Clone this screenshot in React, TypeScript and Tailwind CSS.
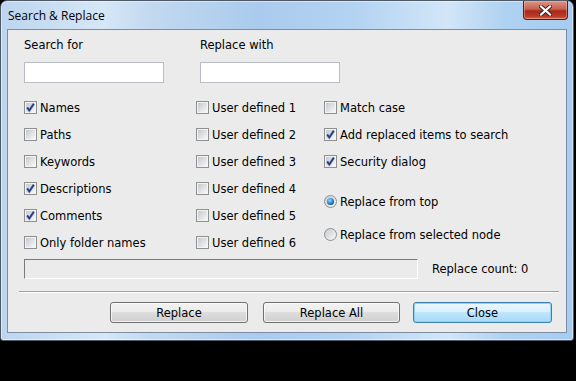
import React from 'react';

const textClass = "text-[11.5px] leading-[14px] text-black font-['DejaVu_Sans',sans-serif]";

function CheckBox({ checked, label }: { checked?: boolean; label: string }) {
  return (
    <div className="flex h-[27px] items-center">
      <span className="relative flex h-[13px] w-[13px] shrink-0 items-center justify-center border border-[#8e8f8f] bg-[#f4f4f4]">
        <span className="h-[9px] w-[9px] bg-gradient-to-br from-[#c5c9d0] to-[#f7f7f7]" />
        {checked && (
          <svg className="absolute left-0 top-0" width="11" height="11" viewBox="0 0 11 11">
            <path d="M2.2 5.6 L4.3 8.4 L8.8 1.8" stroke="#8da0c8" strokeWidth="2.6" fill="none" />
            <path d="M2.2 5.6 L4.3 8.4 L8.8 1.8" stroke="#233a7a" strokeWidth="1.6" fill="none" />
          </svg>
        )}
      </span>
      <span className={textClass + " ml-[3px] whitespace-nowrap"}>{label}</span>
    </div>
  );
}

function Radio({ checked, label }: { checked?: boolean; label: string }) {
  return (
    <div className="flex h-[27px] items-center">
      <span className="flex h-[13px] w-[13px] shrink-0 items-center justify-center rounded-full border border-[#8e8f8f] bg-gradient-to-br from-[#c8ccd2] to-[#f8f8f8]">
        {checked && (
          <span className="h-[7px] w-[7px] rounded-full bg-[radial-gradient(circle_at_40%_35%,#9bd8fa_0%,#2f8fd8_45%,#0c3a6c_85%)]" />
        )}
      </span>
      <span className={textClass + " ml-[3px] whitespace-nowrap"}>{label}</span>
    </div>
  );
}

function Button({ label, primary, width }: { label: string; primary?: boolean; width: string }) {
  const look = primary
    ? "border-[#3c7fb1] bg-[linear-gradient(#eaf6fd_0%,#d9f0fc_50%,#bee6fd_50%,#a7d9f5_100%)] shadow-[inset_0_0_0_1px_#8fd3f6]"
    : "border-[#707070] bg-[linear-gradient(#f2f2f2_0%,#ebebeb_50%,#dddddd_50%,#cfcfcf_100%)] shadow-[inset_0_0_0_1px_rgba(255,255,255,0.7)]";
  return (
    <div className={"flex h-[21px] items-center justify-center rounded-[3px] border " + width + " " + look}>
      <span className={textClass}>{label}</span>
    </div>
  );
}

export default function App() {
  return (
    <div className="h-[381px] w-[576px] overflow-hidden bg-black">
      <div className="flex h-[341px] w-[574px] flex-col rounded-t-[7px] rounded-b-[3px] border border-[#4f5966] bg-[linear-gradient(90deg,#bcd5ee_0%,#d6e7f6_18%,#c2d9f0_26%,#aacbed_45%,#b3d3f2_62%,#d2e6f8_78%,#b0d2f1_88%,#a6ccf0_100%)] shadow-[inset_0_0_0_1px_rgba(255,255,255,0.45)]">
        {/* title bar */}
        <div className="flex h-[28px] items-start justify-between">
          <span className="ml-[7px] mt-[7px] text-[12px] leading-[15px] text-black font-['Open_Sans','DejaVu_Sans',sans-serif]">
            Search &amp; Replace
          </span>
          <div className="mr-[5px] flex h-[19px] w-[45px] items-center justify-center rounded-b-[4px] border border-t-0 border-[#5a1d16] bg-[linear-gradient(#dc9686_0%,#c8604f_45%,#a82a18_55%,#bd3a27_85%,#d66a52_100%)] shadow-[inset_0_0_0_1px_rgba(255,200,190,0.4)]">
            <svg width="13" height="11" viewBox="0 0 13 11">
              <path d="M2 1.5 L11 9.5 M11 1.5 L2 9.5" stroke="#3a1f1c" strokeWidth="4" strokeLinecap="square" />
              <path d="M2 1.5 L11 9.5 M11 1.5 L2 9.5" stroke="#ffffff" strokeWidth="2.2" strokeLinecap="square" />
            </svg>
          </div>
        </div>

        {/* client area */}
        <div className="mx-[6px] mb-[7px] flex flex-1 flex-col border border-[#7d8ea3] bg-[#ebebeb]">
          <div className="ml-[16px] mt-[8px] flex">
            <span className={textClass + " w-[176px]"}>Search for</span>
            <span className={textClass}>Replace with</span>
          </div>
          <div className="ml-[16px] mt-[10px] flex">
            <div className="h-[21px] w-[140px] border border-[#b9bcc2] bg-white" />
            <div className="ml-[36px] h-[21px] w-[140px] border border-[#b9bcc2] bg-white" />
          </div>

          <div className="ml-[16px] mt-[11px] flex">
            <div className="flex w-[172px] flex-col">
              <CheckBox checked label="Names" />
              <CheckBox label="Paths" />
              <CheckBox label="Keywords" />
              <CheckBox checked label="Descriptions" />
              <CheckBox checked label="Comments" />
              <CheckBox label="Only folder names" />
            </div>
            <div className="flex w-[128px] flex-col">
              <CheckBox label="User defined 1" />
              <CheckBox label="User defined 2" />
              <CheckBox label="User defined 3" />
              <CheckBox label="User defined 4" />
              <CheckBox label="User defined 5" />
              <CheckBox label="User defined 6" />
            </div>
            <div className="flex flex-col">
              <CheckBox label="Match case" />
              <CheckBox checked label="Add replaced items to search" />
              <CheckBox checked label="Security dialog" />
              <div className="mt-[13px]">
                <Radio checked label="Replace from top" />
              </div>
              <div className="mt-[6px]">
                <Radio label="Replace from selected node" />
              </div>
            </div>
          </div>

          <div className="ml-[16px] mt-[3px] flex items-center">
            <div className="h-[20px] w-[394px] border border-[#7a7a7a] border-b-white border-r-white" />
            <span className={textClass + " ml-[14px]"}>Replace count: 0</span>
          </div>

          <div className="ml-[11px] mt-[12px] h-[2px] w-[540px] border-t border-[#a0a0a0] border-b border-b-white" />

          <div className="ml-[102px] mt-[9px] flex">
            <Button label="Replace" width="w-[138px]" />
            <div className="ml-[15px]">
              <Button label="Replace All" width="w-[137px]" />
            </div>
            <div className="ml-[13px]">
              <Button primary label="Close" width="w-[139px]" />
            </div>
          </div>
        </div>
      </div>
    </div>
  );
}
